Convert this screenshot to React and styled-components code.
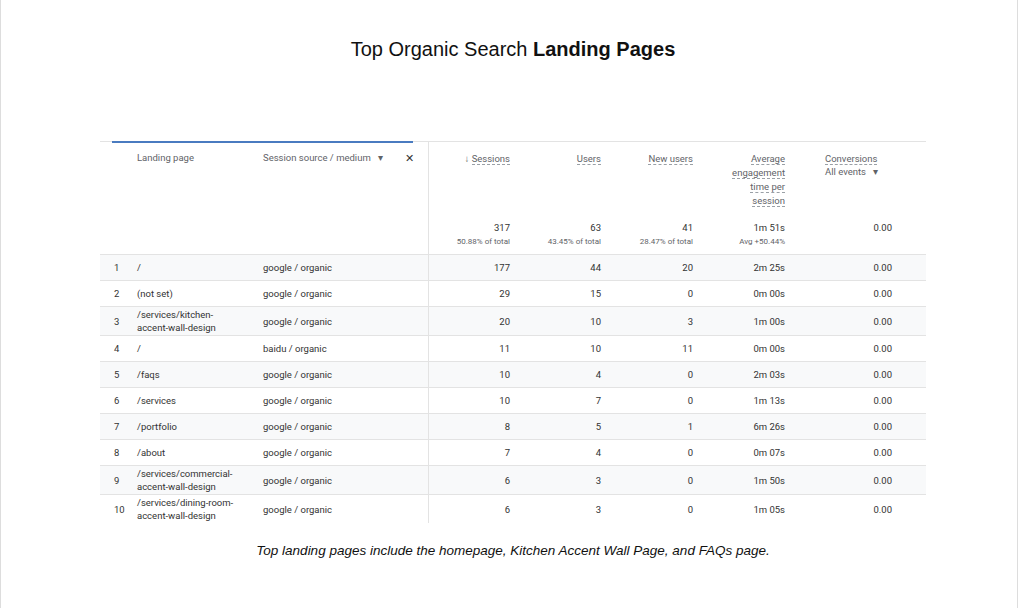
import React from 'react'
import styled, { createGlobalStyle } from 'styled-components'

const Global = createGlobalStyle`
  body { margin: 0; background: #fff; font-family: Roboto, "Liberation Sans", sans-serif; }
`

const rows = [
  ['1', '/', 'google / organic', '177', '44', '20', '2m 25s'],
  ['2', '(not set)', 'google / organic', '29', '15', '0', '0m 00s'],
  ['3', '/services/kitchen-\naccent-wall-design', 'google / organic', '20', '10', '3', '1m 00s'],
  ['4', '/', 'baidu / organic', '11', '10', '11', '0m 00s'],
  ['5', '/faqs', 'google / organic', '10', '4', '0', '2m 03s'],
  ['6', '/services', 'google / organic', '10', '7', '0', '1m 13s'],
  ['7', '/portfolio', 'google / organic', '8', '5', '1', '6m 26s'],
  ['8', '/about', 'google / organic', '7', '4', '0', '0m 07s'],
  ['9', '/services/commercial-\naccent-wall-design', 'google / organic', '6', '3', '0', '1m 50s'],
  ['10', '/services/dining-room-\naccent-wall-design', 'google / organic', '6', '3', '0', '1m 05s'],
]

const Page = styled.div`
  width: 1018px;
  height: 608px;
  padding-left: 8px;
  border-left: 1px solid #ddd;
  border-right: 1px solid #ddd;
  box-sizing: border-box;
  display: flex;
  flex-direction: column;
  align-items: center;
`
const Title = styled.h1`
  margin: 38px 0 0;
  font-family: "Liberation Sans", Arial, sans-serif;
  font-size: 20px;
  font-weight: 400;
  color: #111;
  b { font-weight: 700; }
`
const Table = styled.table`
  margin: 80px 0 0;
  width: 826px;
  border-collapse: collapse;
  font-size: 9.5px;
  color: #333;
  table-layout: fixed;
  border-top: 1px solid #e3e3e3;
`
const Th = styled.th`
  font-weight: 400;
  color: #5f6368;
  text-align: ${p => p.$align || 'right'};
  vertical-align: top;
  padding: 10px ${p => p.$pr || 8}px 0 ${p => p.$pl || 0}px;
  height: 102px;
  position: relative;
  border-right: ${p => (p.$divider ? '1px solid #e3e3e3' : 'none')};
`
const BlueBar = styled.div`
  position: absolute;
  top: -1px;
  left: ${p => p.$left || 0}px;
  right: ${p => p.$right || 0}px;
  height: 2px;
  background: #4a7bc0;
`
const Dotted = styled.span`
  border-bottom: 1px dashed #9aa0a6;
  line-height: 14px;
  display: inline;
`
const Totals = styled.div`
  position: absolute;
  right: ${p => p.$pr || 8}px;
  top: 80px;
  text-align: right;
  color: #333;
  font-size: 9.5px;
  small { display: block; font-size: 8px; color: #5f6368; margin-top: 4px; }
`
const Tr = styled.tr`
  background: ${p => (p.$odd ? '#f8f9fa' : '#fff')};
  border-top: 1px solid #e3e3e3;
`
const Td = styled.td`
  text-align: ${p => p.$align || 'right'};
  padding: 0 ${p => p.$pr || 8}px 0 ${p => p.$pl || 0}px;
  height: ${p => (p.$tall ? 28 : 25)}px;
  white-space: pre-line;
  line-height: 13px;
  border-right: ${p => (p.$divider ? '1px solid #e3e3e3' : 'none')};
`
const Caption = styled.p`
  margin: 20px 0 0;
  font-family: "Liberation Sans", Arial, sans-serif;
  font-style: italic;
  font-size: 13.5px;
  color: #111;
`

export default function App() {
  return (
    <>
      <Global />
      <Page>
        <Title>Top Organic Search <b>Landing Pages</b></Title>
        <Table>
          <colgroup>
            <col style={{ width: 30 }} />
            <col style={{ width: 128 }} />
            <col style={{ width: 170 }} />
            <col style={{ width: 90 }} />
            <col style={{ width: 91 }} />
            <col style={{ width: 92 }} />
            <col style={{ width: 92 }} />
            <col style={{ width: 133 }} />
          </colgroup>
          <thead>
            <tr>
              <Th $align="left" colSpan={2} $pl={37}><BlueBar $left={12} />Landing page</Th>
              <Th $align="left" $divider $pl={5} $pr={14}>
                <BlueBar $right={15} />
                <span style={{ display: 'flex', justifyContent: 'space-between' }}>
                  <span>Session source / medium &nbsp; ▾</span><span style={{ color: '#333', fontSize: 11 }}>✕</span>
                </span>
              </Th>
              <Th>↓ <Dotted>Sessions</Dotted><Totals>317<small>50.88% of total</small></Totals></Th>
              <Th><Dotted>Users</Dotted><Totals>63<small>43.45% of total</small></Totals></Th>
              <Th><Dotted>New users</Dotted><Totals>41<small>28.47% of total</small></Totals></Th>
              <Th>
                <div style={{ lineHeight: '14px' }}>
                  <Dotted>Average</Dotted><br /><Dotted>engagement</Dotted><br /><Dotted>time per</Dotted><br /><Dotted>session</Dotted>
                </div>
                <Totals>1m 51s<small>Avg +50.44%</small></Totals>
              </Th>
              <Th $align="left" $pl={32}>
                <Dotted>Conversions</Dotted><br />All events &nbsp; ▾
                <Totals $pr={34}>0.00<small>&nbsp;</small></Totals>
              </Th>
            </tr>
          </thead>
          <tbody>
            {rows.map((r, i) => {
              const tall = r[1].includes('\n')
              return (
                <Tr key={i} $odd={i % 2 === 0}>
                  <Td $align="left" $pl={14} $pr={0} $tall={tall}>{r[0]}</Td>
                  <Td $align="left" $pl={7} $tall={tall}>{r[1]}</Td>
                  <Td $align="left" $pl={5} $divider $tall={tall}>{r[2]}</Td>
                  <Td $tall={tall}>{r[3]}</Td>
                  <Td $tall={tall}>{r[4]}</Td>
                  <Td $tall={tall}>{r[5]}</Td>
                  <Td $tall={tall}>{r[6]}</Td>
                  <Td $pr={34} $tall={tall}>0.00</Td>
                </Tr>
              )
            })}
          </tbody>
        </Table>
        <Caption>Top landing pages include the homepage, Kitchen Accent Wall Page, and FAQs page.</Caption>
      </Page>
    </>
  )
}
